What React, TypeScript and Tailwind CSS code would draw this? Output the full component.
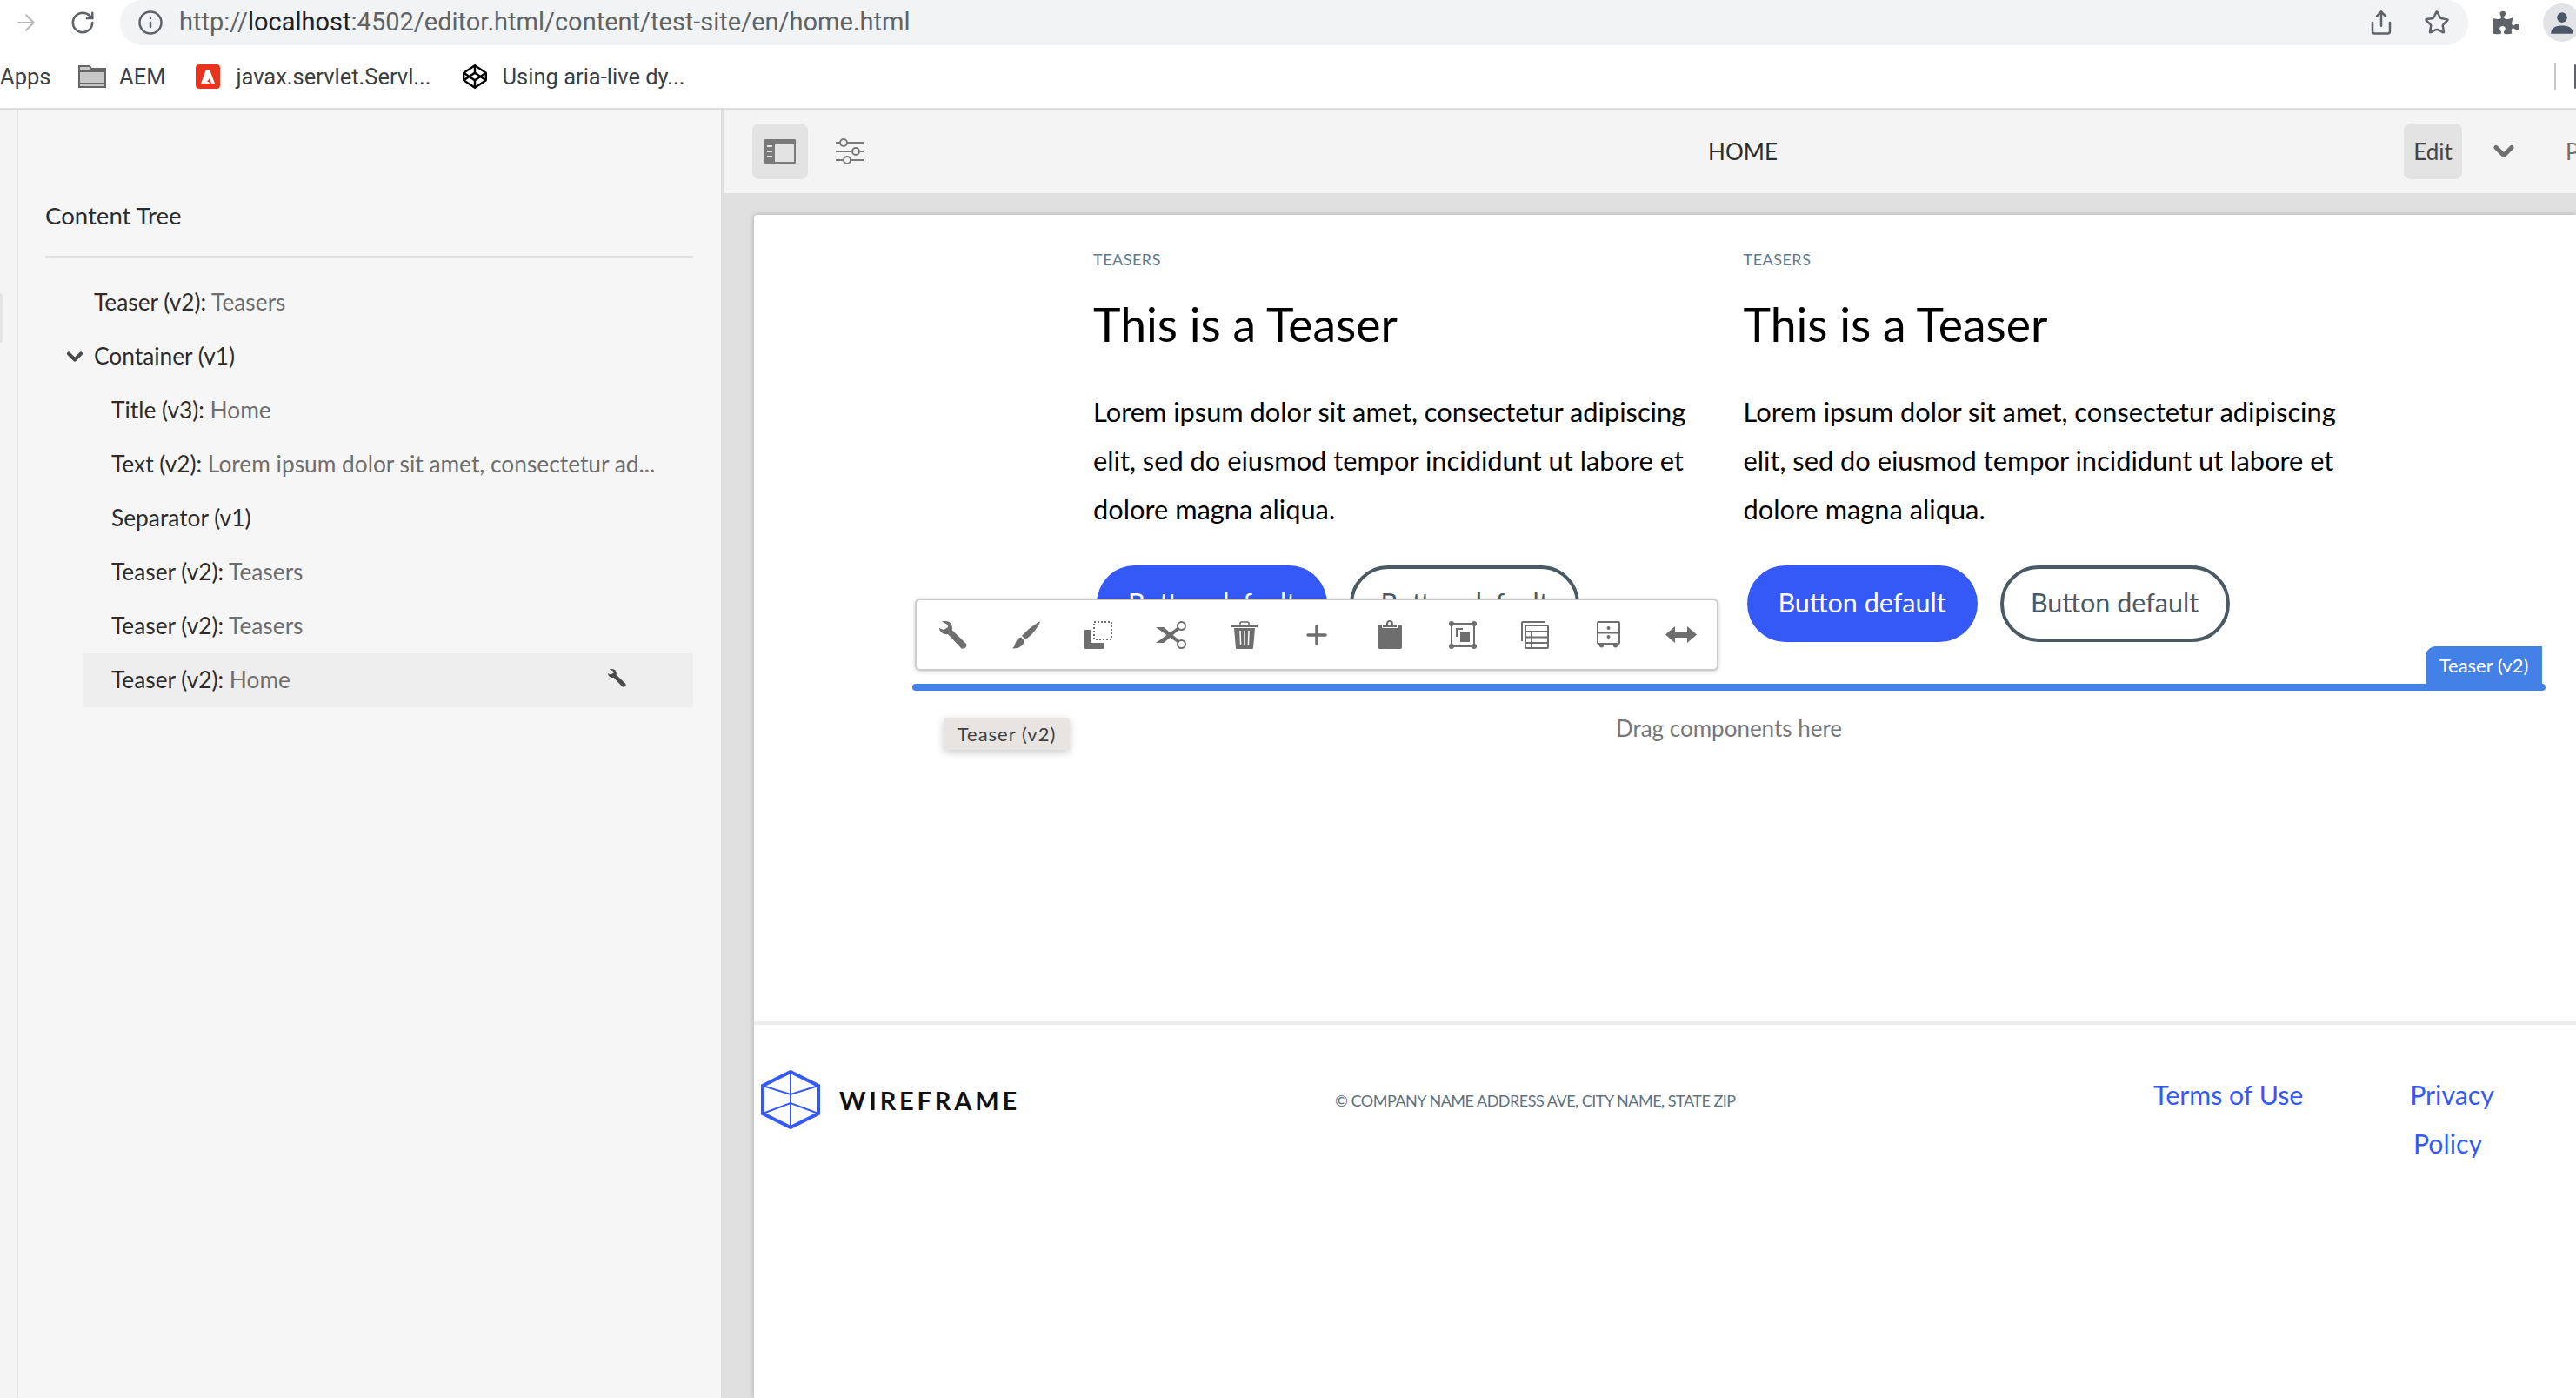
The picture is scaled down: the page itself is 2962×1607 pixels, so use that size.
import React from "react"
import { ArrowRight, RotateCw, Info, Share, Star, ChevronDown } from "lucide-react"
import { FaPuzzlePiece, FaCodepen } from "react-icons/fa"

const WrenchIcon = ({ className }: { className?: string }) => (
  <svg viewBox="0 0 32 32" className={className} fill="currentColor">
    <path d="M3 .5C7-.5 13 0 14.500 5c.6 2 .5 4 0 5L31 26c1 2 0 4-1.500 5-1.500 1-3.500 1-4.500 0L10 15c-2 .5-6 0-8-2.500C.5 11 0 9 0 8l5 2 5-3-.5-3z" />
  </svg>
)

const toolbarIcons = [
  <WrenchIcon className="h-8 w-8" />,
  <svg viewBox="0 0 32 32" className="h-8 w-8" fill="currentColor">
    <path d="M31.500.5l.5.5c-3 7-10 16-17 20l-4-4C16 11 25 4 31.500.5z" />
    <path d="M10 18.500l4 4c-.5 4.500-5 9.500-14 9 3-2.500 3-5.500 5-9.500 1-2 3-3 5-3.500z" />
  </svg>,
  <svg viewBox="0 0 32 32" className="h-8 w-8" fill="currentColor">
    <rect x="11" y="1" width="20" height="20" fill="none" stroke="currentColor" strokeWidth="2" strokeDasharray="2 2" />
    <path d="M0 11a1 1 0 0 1 1-1h6v15h15v6a1 1 0 0 1-1 1H1a1 1 0 0 1-1-1z" />
  </svg>,
  <svg viewBox="0 0 35 32" className="h-8 w-[35px]" fill="currentColor">
    <circle cx="29.500" cy="5.500" r="4.500" fill="none" stroke="currentColor" strokeWidth="2" />
    <circle cx="29.500" cy="26.500" r="4.500" fill="none" stroke="currentColor" strokeWidth="2" />
    <path d="M0 7l9 0 18 15-2 3z" />
    <path d="M0 25l9 0 18-15-2-3z" />
  </svg>,
  <svg viewBox="0 0 30 32" className="h-8 w-[30px]" fill="currentColor">
    <path d="M10 4V2a1 1 0 0 1 1-1h8a1 1 0 0 1 1 1v2" fill="none" stroke="currentColor" strokeWidth="1.500" />
    <rect x="0" y="4" width="30" height="3" />
    <path d="M3 8h24l-2 23a1 1 0 0 1-1 1H6a1 1 0 0 1-1-1z" />
    <path d="M10 11l.6 17M15 11v17M20 11l-.6 17" stroke="#fff" strokeWidth="1.500" />
  </svg>,
  <svg viewBox="0 0 24 24" className="h-6 w-6" fill="none" stroke="currentColor" strokeWidth="3.500" strokeLinecap="round">
    <path d="M12 2v20M2 12h20" />
  </svg>,
  <svg viewBox="0 0 28 33" className="h-[33px] w-7" fill="currentColor">
    <rect x="0" y="5" width="28" height="28" rx="2" />
    <path d="M5 4h18v4a1 1 0 0 1-1 1H6a1 1 0 0 1-1-1z" fill="#fff" />
    <rect x="6" y="5" width="16" height="3" />
    <circle cx="14" cy="4" r="3" fill="none" stroke="currentColor" strokeWidth="2" />
  </svg>,
  <svg viewBox="0 0 32 32" className="h-8 w-8" fill="currentColor">
    <rect x="3" y="3" width="26" height="26" fill="none" stroke="currentColor" strokeWidth="2" />
    <circle cx="3" cy="3" r="3" />
    <circle cx="29" cy="3" r="3" />
    <circle cx="3" cy="29" r="3" />
    <circle cx="29" cy="29" r="3" />
    <path d="M8 8h8v2h-6v8H8z" />
    <rect x="13" y="13" width="11" height="11" />
  </svg>,
  <svg viewBox="0 0 32 32" className="h-8 w-8" fill="none" stroke="currentColor" strokeWidth="2">
    <path d="M1 23V2a1 1 0 0 1 1-1h25" />
    <rect x="5" y="5" width="26" height="26" rx="1" />
    <path d="M5 12h26M5 18.500h26M5 25h26M12 12v19" />
  </svg>,
  <svg viewBox="0 0 27 31" className="h-[31px] w-[27px]" fill="none" stroke="currentColor" strokeWidth="2">
    <rect x="1" y="1" width="25" height="25" rx="1" />
    <path d="M1 13.500h25" />
    <circle cx="13.500" cy="8" r="2" fill="currentColor" stroke="none" />
    <circle cx="13.500" cy="18" r="2" fill="currentColor" stroke="none" />
    <circle cx="5.500" cy="28" r="2.500" fill="currentColor" stroke="none" />
    <circle cx="21.500" cy="28" r="2.500" fill="currentColor" stroke="none" />
  </svg>,
  <svg viewBox="0 0 36 19" className="h-[19px] w-9" fill="currentColor">
    <path d="M0 9.500L11 0v6h14V0l11 9.500L25 19v-6H11v6z" />
  </svg>,
]

const treeRows = [
  { label: "Title (v3):", value: " Home" },
  { label: "Text (v2):", value: " Lorem ipsum dolor sit amet, consectetur ad..." },
  { label: "Separator (v1)", value: "" },
  { label: "Teaser (v2):", value: " Teasers" },
  { label: "Teaser (v2):", value: " Teasers" },
]

const Teaser = () => (
  <div className="w-[747.5px] shrink-0">
    <p className="text-[18px] leading-[28px] tracking-[0.5px] text-[#5f7a8c]">TEASERS</p>
    <h2 className="mt-[25px] text-[53.5px] leading-[70px] text-black">This is a Teaser</h2>
    <p className="mt-[39px] whitespace-nowrap text-[30.8px] leading-[56px] text-black">
      Lorem ipsum dolor sit amet, consectetur adipiscing
      <br />
      elit, sed do eiusmod tempor incididunt ut labore et
      <br />
      dolore magna aliqua.
    </p>
    <div className="ml-[4px] mt-[36px] flex gap-[26px] text-[30.5px]">
      <button className="h-[88px] w-[265px] rounded-[44px] bg-[#3559f6] pb-[2px] text-white">Button default</button>
      <button className="h-[88px] w-[264px] rounded-[44px] border-[4px] border-[#4a5a64] pb-[2px] text-[#4a5a64]">Button default</button>
    </div>
  </div>
)

const App = () => {
  return (
    <div className="flex h-screen w-full flex-col overflow-hidden bg-white font-['Lato',sans-serif]">
      {/* browser chrome */}
      <div className="flex h-[52px] shrink-0 items-center font-['Roboto',sans-serif]">
        <ArrowRight className="ml-[15px] h-[30px] w-[30px] shrink-0 text-[#b5b7ba]" strokeWidth={1.5} />
        <RotateCw className="ml-[35px] h-[30px] w-[30px] shrink-0 text-[#5f6368]" strokeWidth={2} />
        <div className="ml-[28px] flex h-[52px] w-[2700px] shrink-0 items-center rounded-[26px] bg-[#f1f3f4]">
          <Info className="ml-[20px] h-[30px] w-[30px] text-[#5f6368]" strokeWidth={2} />
          <p className="ml-[18px] text-[29px] text-[#5f6368]">
            http://<span className="text-[#202124]">localhost</span>:4502/editor.html/content/test-site/en/home.html
          </p>
          <Share className="ml-auto h-[30px] w-[30px] text-[#5f6368]" strokeWidth={2} />
          <Star className="ml-[34px] mr-[21px] h-[30px] w-[30px] text-[#5f6368]" strokeWidth={2} />
        </div>
        <FaPuzzlePiece className="ml-[29px] h-[30px] w-[30px] shrink-0 text-[#5f6368]" />
        <div className="ml-[27px] flex h-[44px] w-[44px] shrink-0 items-center justify-center rounded-full bg-[#e1e3e6]">
          <svg viewBox="0 0 24 24" className="h-[28px] w-[28px]" fill="#4d5666">
            <circle cx="12" cy="7" r="5" />
            <path d="M1 23c0-6 5-8 11-8s11 2 11 8z" />
          </svg>
        </div>
      </div>
      <div className="flex h-[74px] shrink-0 items-center border-b-2 border-[#dddddd] text-[25.5px] text-[#3c4043] font-['Roboto',sans-serif]">
        <span className="w-[90px]">Apps</span>
        <svg viewBox="0 0 32 26" className="h-[26px] w-[32px]">
          <path d="M1 25V1h12l2 3h16v21z" fill="#c8c8c8" stroke="#666" strokeWidth="2" />
          <path d="M1 7h30M1 21h30" stroke="#666" strokeWidth="2" />
        </svg>
        <span className="ml-[15px]">AEM</span>
        <svg viewBox="0 0 28 28" className="ml-[35px] h-[28px] w-[28px]">
          <rect width="28" height="28" rx="4" fill="#e8331e" />
          <path d="M12 6h4l6 16h-4l-2-6-3 4h2l1 2H6z" fill="#fff" />
        </svg>
        <span className="ml-[18px]">javax.servlet.Servl...</span>
        <FaCodepen className="ml-[36px] h-[28px] w-[28px] text-black" />
        <span className="ml-[18px]">Using aria-live dy...</span>
        <div className="ml-auto h-[32px] w-[2px] bg-[#c8c8c8]" />
        <div className="ml-[21px] h-[28px] w-[2px] rounded-[1px] bg-[#5f6368]" />
      </div>

      <div className="flex min-h-0 flex-1">
        {/* content tree rail + panel */}
        <div className="w-[19px] shrink-0 bg-[#f4f4f4]">
          <div className="mt-[211px] h-[57px] w-[3px] rounded-r-[3px] bg-[#e4e4e4]" />
        </div>
        <aside className="w-[810px] shrink-0 border-l-2 border-[#e0e0e0] bg-[#f6f6f6] pl-[31px] pr-[32px] pt-[107px] text-[26.3px] text-[#2c2c2c]">
          <h3 className="h-[30px] text-[27.6px] leading-[30px]">Content Tree</h3>
          <div className="mt-[31px] h-[2px] bg-[#e1e1e1]" />
          <div className="mt-[21px]">
            <div className="flex h-[62px] items-center pl-[56px]">
              Teaser (v2):<span className="whitespace-pre text-[#6e6e6e]"> Teasers</span>
            </div>
            <div className="flex h-[62px] items-center pl-[20px]">
              <ChevronDown className="mr-[8px] h-[28px] w-[28px] shrink-0 text-[#4b4b4b]" strokeWidth={3.5} />
              Container (v1)
            </div>
            {treeRows.map((row, i) => (
              <div key={i} className="ml-[44px] flex h-[62px] items-center whitespace-nowrap pl-[32px]">
                {row.label}
                <span className="whitespace-pre text-[#6e6e6e]">{row.value}</span>
              </div>
            ))}
            <div className="ml-[44px] flex h-[62px] items-center justify-between bg-[#eeeeee] pl-[32px] pr-[77px]">
              <span>
                Teaser (v2):<span className="whitespace-pre text-[#6e6e6e]"> Home</span>
              </span>
              <WrenchIcon className="mb-[6px] h-[21px] w-[21px] text-[#4b4b4b]" />
            </div>
          </div>
        </aside>

        {/* editor */}
        <main className="flex w-[2133px] shrink-0 flex-col bg-[#e0e0e0]">
          <div className="ml-[4px] flex h-[96px] shrink-0 items-center overflow-hidden bg-[#f4f4f4] pl-[32px] text-[26px] text-[#2c2c2c]">
            <div className="flex h-[64px] w-[64px] shrink-0 items-center justify-center rounded-[8px] bg-[#e3e3e3]">
              <svg viewBox="0 0 36 28" className="h-[28px] w-[36px]">
                <rect width="36" height="28" rx="1" fill="#7a7a7a" />
                <rect x="12" y="6" width="22" height="20" fill="#e3e3e3" />
                <path d="M3 8h6M3 14h6M3 20h6" stroke="#e3e3e3" strokeWidth="2" />
              </svg>
            </div>
            <svg viewBox="0 0 32 30" className="ml-[32px] h-[30px] w-[32px] shrink-0" fill="#f4f4f4" stroke="#7a7a7a" strokeWidth="2">
              <path d="M0 5h32M0 15h32M0 25h32" />
              <circle cx="9" cy="5" r="4" />
              <circle cx="23" cy="15" r="4" />
              <circle cx="13" cy="25" r="4" />
            </svg>
            <span className="ml-[971px] w-[80px] shrink-0 text-center">HOME</span>
            <span className="ml-[720px] flex h-[64px] w-[67px] shrink-0 items-center justify-center rounded-[8px] bg-[#e3e3e3] text-[#444444]">Edit</span>
            <ChevronDown className="ml-[30px] h-[36px] w-[36px] shrink-0 text-[#707070]" strokeWidth={3.5} />
            <span className="ml-[53px] shrink-0 text-[#6e6e6e]">Preview</span>
          </div>

          <div className="flex min-h-0 flex-1 flex-col pl-[38px] pt-[25px]">
            <div className="relative flex-1 rounded-tl-[4px] bg-white pt-[37px] shadow-[0_0_6px_rgba(0,0,0,0.25)]">
              <div className="flex pl-[390px]">
                <Teaser />
                <Teaser />
              </div>

              <div className="relative ml-[182px] mt-[48px] h-[8px] w-[1878px] rounded-[4px] bg-[#4481e6]">
                <span className="absolute bottom-full right-[4px] flex h-[43px] w-[134px] items-center justify-center rounded-tl-[12px] bg-[#4481e6] text-[22px] text-white">
                  Teaser (v2)
                </span>
              </div>
              <p className="ml-[182px] mt-[28px] h-[30px] w-[1878px] text-center text-[26px] leading-[30px] text-[#777777]">Drag components here</p>

              <footer className="mt-[322px] flex border-t-4 border-[#eeeeee] pl-[8px] pt-[52px]">
                <svg viewBox="0 0 68 68" className="h-[68px] w-[68px] shrink-0" fill="none" stroke="#3559f6">
                  <path d="M34 2l32 16v32L34 66 2 50V18z" strokeWidth="4" />
                  <path d="M2 18l32 10 32-10M34 2v64M2 50l32-12 32 12" strokeWidth="2" />
                </svg>
                <span className="ml-[22px] flex h-[68px] w-[203px] items-center pt-[2px] text-[29px] font-bold tracking-[3.8px] text-[#111111]">WIREFRAME</span>
                <span className="ml-[367px] flex h-[68px] w-[461px] items-center whitespace-nowrap pt-[2px] text-[18px] tracking-[-0.5px] text-[#607280]">© COMPANY NAME ADDRESS AVE, CITY NAME, STATE ZIP</span>
                <a className="ml-[480px] w-[172px] whitespace-nowrap text-[30.3px] leading-[56px] text-[#3559f6]">Terms of Use</a>
                <div className="ml-[102px] w-[139px] text-center text-[30.3px] leading-[56px] text-[#3559f6]">
                  <a className="block">Privacy</a>
                  <a className="block pr-[10px]">Policy</a>
                </div>
              </footer>

              {/* component toolbar, sits over the teaser buttons */}
              <div className="absolute left-[185px] top-[441px] flex h-[83px] w-[924px] items-center rounded-[6px] border-2 border-[#cccccc] bg-white text-[#6e6e6e] shadow-[0_1px_4px_rgba(0,0,0,0.2)]">
                {toolbarIcons.map((icon, i) => (
                  <div key={i} className="flex w-[83.7px] shrink-0 justify-center">
                    {icon}
                  </div>
                ))}
              </div>
              <div className="absolute left-[218px] top-[578px] flex h-[37px] w-[145px] items-center justify-center rounded-[3px] bg-[#e8e4e1] text-[22px] tracking-[1px] text-[#3f3f3f] shadow-[0_3px_10px_rgba(0,0,0,0.2)]">
                Teaser (v2)
              </div>
            </div>
          </div>
        </main>
      </div>
    </div>
  )
}

export default App
